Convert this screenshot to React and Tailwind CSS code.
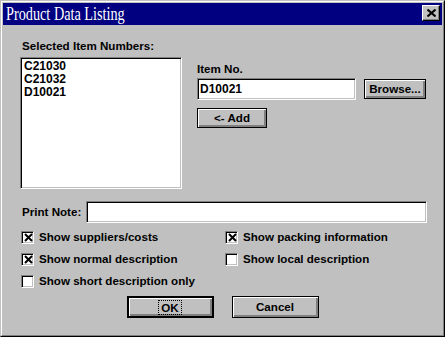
import React from "react";

const sans = { fontFamily: '"Liberation Sans", Arial, sans-serif' };

function Btn({ w, h = 20, children, def = false }) {
  return (
    <div
      className={`flex items-center justify-center bg-[#c0c0c0] text-[11.6px] font-bold leading-[14px] text-black ${
        def ? "border-2" : "border"
      } border-black shadow-[inset_1px_1px_0_#ffffff,inset_-1px_-1px_0_#808080,inset_-2px_-2px_0_#808080]`}
      style={{ width: w, height: h }}
    >
      {children}
    </div>
  );
}

function Check({ checked, label }) {
  return (
    <div className="flex h-[22px] items-center pl-[1px]">
      <div className="flex h-[13px] w-[13px] items-center justify-center border border-t-[#808080] border-l-[#808080] border-b-white border-r-white bg-white shadow-[inset_1px_1px_0_#000000,inset_-1px_-1px_0_#c0c0c0]">
        {checked && (
          <svg width="9" height="9" viewBox="0 0 9 9" className="ml-[1px] mt-[1px]">
            <path d="M1 1 L8 8 M8 1 L1 8" stroke="black" strokeWidth="2" />
          </svg>
        )}
      </div>
      <span className="ml-[5px] text-[11.6px] font-bold leading-[14px]">{label}</span>
    </div>
  );
}

export default function App() {
  return (
    <div className="h-[337px] w-[445px] border border-t-[#c0c0c0] border-l-[#c0c0c0] border-r-black border-b-black" style={sans}>
      <div className="flex h-full w-full flex-col border border-t-white border-l-white border-r-[#808080] border-b-[#808080] bg-[#c0c0c0] p-[1px]">
        <div className="flex h-[22px] shrink-0 bg-[#000080]">
          <span
            className="ml-[3px] origin-left scale-x-[0.75] whitespace-nowrap text-[19px] leading-[21px] text-white"
            style={{ fontFamily: '"Liberation Serif", "Times New Roman", serif' }}
          >
            Product Data Listing
          </span>
          <div className="ml-auto mr-[2px] mt-[2px] flex h-[16px] w-[18px] items-center justify-center border border-t-white border-l-white border-r-black border-b-black bg-[#c0c0c0] shadow-[inset_-1px_-1px_0_#808080]">
            <svg width="9" height="8" viewBox="0 0 9 8">
              <path d="M0.5 0.5 L8.5 7.5 M8.5 0.5 L0.5 7.5" stroke="black" strokeWidth="2" />
            </svg>
          </div>
        </div>
        <div className="flex flex-col pl-[17px] pt-[14px] text-black">
          <div className="flex">
            <div className="flex flex-col">
              <span className="ml-[2px] text-[11.6px] font-bold leading-[14px]">Selected Item Numbers:</span>
              <div className="mt-[4px] h-[132px] w-[162px] border border-t-[#808080] border-l-[#808080] border-b-white border-r-white bg-white pl-[3px] pt-[2px] shadow-[inset_1px_1px_0_#000000,inset_-1px_-1px_0_#c0c0c0]">
                <div className="text-[12px] font-bold leading-[13px]">C21030</div>
                <div className="text-[12px] font-bold leading-[13px]">C21032</div>
                <div className="text-[12px] font-bold leading-[13px]">D10021</div>
              </div>
            </div>
            <div className="ml-[15px] mt-[23px] flex flex-col">
              <span className="text-[11.6px] font-bold leading-[14px]">Item No.</span>
              <div className="mt-[2px] flex items-center">
                <div className="flex h-[22px] w-[159px] items-center border border-t-[#808080] border-l-[#808080] border-b-white border-r-white bg-white pl-[2px] shadow-[inset_1px_1px_0_#000000,inset_-1px_-1px_0_#c0c0c0]">
                  <span className="text-[12px] font-bold leading-[14px]">D10021</span>
                </div>
                <div className="ml-[8px]">
                  <Btn w={62}>Browse...</Btn>
                </div>
              </div>
              <div className="mt-[8px]">
                <Btn w={70}>&lt;- Add</Btn>
              </div>
            </div>
          </div>
          <div className="mt-[12px] flex items-center">
            <span className="ml-[2px] w-[64px] text-[11.6px] font-bold leading-[14px]">Print Note:</span>
            <div className="h-[22px] w-[341px] border border-t-[#808080] border-l-[#808080] border-b-white border-r-white bg-white shadow-[inset_1px_1px_0_#000000,inset_-1px_-1px_0_#c0c0c0]" />
          </div>
          <div className="mt-[3px] grid grid-cols-[204px_1fr]">
            <Check checked label="Show suppliers/costs" />
            <Check checked label="Show packing information" />
            <Check checked label="Show normal description" />
            <Check label="Show local description" />
            <Check label="Show short description only" />
          </div>
        </div>
        <div className="mt-[4px] flex justify-center gap-[18px]">
          <Btn w={87} h={22} def>
            <span className="border border-dotted border-black px-[2px] py-[0px] leading-[13px]">OK</span>
          </Btn>
          <Btn w={87} h={22}>Cancel</Btn>
        </div>
      </div>
    </div>
  );
}
